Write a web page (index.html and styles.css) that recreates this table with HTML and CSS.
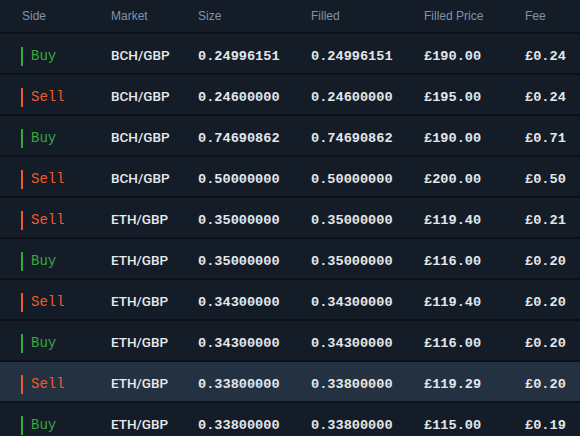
FILE: index.html
```html
<!DOCTYPE html>
<html>
<head>
<meta charset="utf-8">
<link rel="stylesheet" href="styles.css">
</head>
<body>
<div class="table">
  <div class="row head">
    <div class="c">Side</div><div class="c">Market</div><div class="c">Size</div><div class="c">Filled</div><div class="c">Filled Price</div><div class="c">Fee</div>
  </div>
  <div class="row"><div class="c side buy"><span class="bar"></span>Buy</div><div class="c mkt">BCH/GBP</div><div class="c num">0.24996151</div><div class="c num">0.24996151</div><div class="c num">£190.00</div><div class="c num">£0.24</div></div>
  <div class="row"><div class="c side sell"><span class="bar"></span>Sell</div><div class="c mkt">BCH/GBP</div><div class="c num">0.24600000</div><div class="c num">0.24600000</div><div class="c num">£195.00</div><div class="c num">£0.24</div></div>
  <div class="row"><div class="c side buy"><span class="bar"></span>Buy</div><div class="c mkt">BCH/GBP</div><div class="c num">0.74690862</div><div class="c num">0.74690862</div><div class="c num">£190.00</div><div class="c num">£0.71</div></div>
  <div class="row"><div class="c side sell"><span class="bar"></span>Sell</div><div class="c mkt">BCH/GBP</div><div class="c num">0.50000000</div><div class="c num">0.50000000</div><div class="c num">£200.00</div><div class="c num">£0.50</div></div>
  <div class="row"><div class="c side sell"><span class="bar"></span>Sell</div><div class="c mkt">ETH/GBP</div><div class="c num">0.35000000</div><div class="c num">0.35000000</div><div class="c num">£119.40</div><div class="c num">£0.21</div></div>
  <div class="row"><div class="c side buy"><span class="bar"></span>Buy</div><div class="c mkt">ETH/GBP</div><div class="c num">0.35000000</div><div class="c num">0.35000000</div><div class="c num">£116.00</div><div class="c num">£0.20</div></div>
  <div class="row"><div class="c side sell"><span class="bar"></span>Sell</div><div class="c mkt">ETH/GBP</div><div class="c num">0.34300000</div><div class="c num">0.34300000</div><div class="c num">£119.40</div><div class="c num">£0.20</div></div>
  <div class="row"><div class="c side buy"><span class="bar"></span>Buy</div><div class="c mkt">ETH/GBP</div><div class="c num">0.34300000</div><div class="c num">0.34300000</div><div class="c num">£116.00</div><div class="c num">£0.20</div></div>
  <div class="row hl"><div class="c side sell"><span class="bar"></span>Sell</div><div class="c mkt">ETH/GBP</div><div class="c num">0.33800000</div><div class="c num">0.33800000</div><div class="c num">£119.29</div><div class="c num">£0.20</div></div>
  <div class="row"><div class="c side buy"><span class="bar"></span>Buy</div><div class="c mkt">ETH/GBP</div><div class="c num">0.33800000</div><div class="c num">0.33800000</div><div class="c num">£115.00</div><div class="c num">£0.19</div></div>
</div>
</body>
</html>
```
FILE: styles.css
```css
html, body {
  margin: 0;
  padding: 0;
  background: #141d27;
  overflow: hidden;
}
.table {
  width: 580px;
}
.row {
  display: grid;
  grid-template-columns: 90px 87px 113px 113px 101px 1fr;
  padding-left: 21px;
  padding-top: 5px;
  box-sizing: border-box;
  height: 41px;
  align-items: center;
  border-bottom: 2px solid #0b1118;
}
.row.head {
  height: 34px;
  padding-top: 0;
  padding-left: 22px;
  grid-template-columns: 89px 87px 113px 113px 101px 1fr;
  font-family: "Liberation Sans", Arial, sans-serif;
  font-size: 12px;
  color: #8193aa;
}
.row.hl {
  background: #243140;
}
.c {
  white-space: nowrap;
}
.side {
  display: flex;
  align-items: center;
  font-family: "Liberation Mono", "Courier New", monospace;
  font-size: 14px;
}
.bar {
  width: 2px;
  height: 19px;
  margin-right: 8px;
}
.buy { color: #35a93a; }
.buy .bar { background: #35a93a; }
.sell { color: #f05a2a; }
.sell .bar { background: #f05a2a; }
.mkt {
  font-family: Roboto, "Liberation Sans", Arial, sans-serif;
  font-size: 13.5px;
  font-weight: 500;
  color: #e6eaee;
  padding-bottom: 3px;
}
.num {
  font-family: "Liberation Mono", "Courier New", monospace;
  font-size: 13.6px;
  font-weight: bold;
  color: #e3e7eb;
}
```
